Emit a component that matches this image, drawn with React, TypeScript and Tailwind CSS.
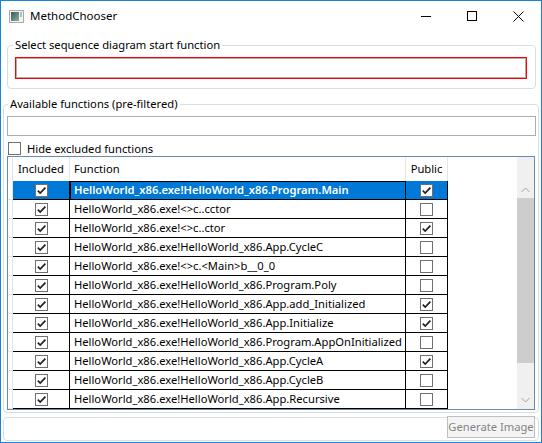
import React from 'react'

const rows: { fn: string; pub: boolean }[] = [
  { fn: 'HelloWorld_x86.exe!HelloWorld_x86.Program.Main', pub: true },
  { fn: 'HelloWorld_x86.exe!<>c..cctor', pub: false },
  { fn: 'HelloWorld_x86.exe!<>c..ctor', pub: true },
  { fn: 'HelloWorld_x86.exe!HelloWorld_x86.App.CycleC', pub: false },
  { fn: 'HelloWorld_x86.exe!<>c.<Main>b__0_0', pub: false },
  { fn: 'HelloWorld_x86.exe!HelloWorld_x86.Program.Poly', pub: false },
  { fn: 'HelloWorld_x86.exe!HelloWorld_x86.App.add_Initialized', pub: true },
  { fn: 'HelloWorld_x86.exe!HelloWorld_x86.App.Initialize', pub: true },
  { fn: 'HelloWorld_x86.exe!HelloWorld_x86.Program.AppOnInitialized', pub: false },
  { fn: 'HelloWorld_x86.exe!HelloWorld_x86.App.CycleA', pub: true },
  { fn: 'HelloWorld_x86.exe!HelloWorld_x86.App.CycleB', pub: false },
  { fn: 'HelloWorld_x86.exe!HelloWorld_x86.App.Recursive', pub: false },
]

function Check({ checked }: { checked: boolean }) {
  return (
    <span className="flex h-[13px] w-[13px] items-center justify-center border border-[#707070] bg-white">
      {checked && (
        <svg width="11" height="11" viewBox="0 0 11 11">
          <path d="M1.8 5.6 L4.2 8 L9.4 2.6" fill="none" stroke="#212121" strokeWidth="1.7" />
        </svg>
      )}
    </span>
  )
}

function AppIcon() {
  return (
    <svg width="15" height="13" viewBox="0 0 15 13">
      <defs>
        <linearGradient id="ic" x1="0" y1="0" x2="1" y2="1">
          <stop offset="0" stopColor="#2f5563" />
          <stop offset="1" stopColor="#8fb39a" />
        </linearGradient>
      </defs>
      <rect x="0.5" y="0.5" width="14" height="12" fill="#f4f4f4" stroke="#a9a9a9" />
      <rect x="2" y="2" width="8" height="9" fill="url(#ic)" />
      <rect x="11" y="2" width="2" height="5" fill="#b8b8b8" />
    </svg>
  )
}

export default function App() {
  return (
    <div className="flex h-[443px] w-[542px] flex-col border border-[#1883d7] bg-white font-['Noto_Sans',sans-serif] text-[11.2px] text-black">
      {/* title bar */}
      <div className="flex h-[30px] shrink-0 items-center">
        <div className="ml-[8px] flex items-center">
          <AppIcon />
        </div>
        <span className="ml-[6px] text-[11.5px] leading-none">MethodChooser</span>
        <div className="ml-auto flex h-full">
          <div className="flex h-full w-[46px] items-center justify-center">
            <span className="h-px w-[10px] bg-black" />
          </div>
          <div className="flex h-full w-[46px] items-center justify-center">
            <span className="h-[10px] w-[10px] border border-black" />
          </div>
          <div className="flex h-full w-[46px] items-center justify-center">
            <svg width="11" height="11" viewBox="0 0 11 11">
              <path d="M0.5 0.5 L10.5 10.5 M10.5 0.5 L0.5 10.5" stroke="#000" strokeWidth="1" />
            </svg>
          </div>
        </div>
      </div>

      {/* start function group */}
      <fieldset className="ml-[6px] mt-[7px] w-[529px] rounded-[4px] border border-[#d5dfe5] pb-[9px] pl-[5px]">
        <legend className="px-[2px] leading-[14px]">Select sequence diagram start function</legend>
        <div className="ml-[2px] mt-[5px] h-[22px] w-[512px] border border-[#ff0000]">
          <div className="h-full w-full border border-[#abadb3] bg-white" />
        </div>
      </fieldset>

      {/* available functions group */}
      <fieldset className="ml-[2px] mt-[8px] w-[536px] rounded-[4px] border border-[#d5dfe5] pb-[2px] pl-[3px]">
        <legend className="ml-[1px] px-[2px] leading-[14px]">Available functions (pre-filtered)</legend>
        <div className="mt-[5px] h-[20px] w-[529px] border border-[#abadb3] bg-white" />
        <div className="ml-[1px] mt-[6px] flex h-[14px] items-start gap-[6px]">
          <Check checked={false} />
          <span className="leading-[14px]">Hide excluded functions</span>
        </div>

        {/* data grid */}
        <div className="flex h-[254px] w-[528px] border border-[#688caf] bg-white">
          <div className="flex flex-1 flex-col overflow-hidden">
            <div className="flex h-[24px] shrink-0">
              <div className="w-[5px] border-r border-[#e5e5e5]" />
              <div className="flex w-[57px] items-center justify-center border-r border-[#e5e5e5] pt-px">Included</div>
              <div className="flex w-[336px] items-center border-r border-[#e5e5e5] pl-[4px] pt-px">Function</div>
              <div className="flex w-[42px] items-center justify-center border-r border-[#e5e5e5] pt-px">Public</div>
              <div className="flex-1" />
            </div>
            {rows.map((r, i) => {
              const sel = i === 0
              return (
                <div key={i} className="flex h-[19px] shrink-0">
                  <div className="w-[5px] border-b border-r border-[#e5e5e5]" />
                  <div
                    className={`flex w-[57px] items-center justify-center border-b border-r border-black ${sel ? 'bg-[#0078d7]' : ''}`}
                  >
                    <Check checked />
                  </div>
                  <div
                    className={`flex w-[336px] items-center overflow-hidden whitespace-nowrap border-b border-r border-black pl-[4px] ${
                      sel ? 'bg-[#0078d7] font-semibold text-white shadow-[inset_1px_1px_0_#000]' : ''
                    }`}
                  >
                    {r.fn}
                  </div>
                  <div
                    className={`flex w-[42px] items-center justify-center border-b border-r border-black ${sel ? 'bg-[#0078d7]' : ''}`}
                  >
                    <Check checked={r.pub} />
                  </div>
                  <div className="flex-1" />
                </div>
              )
            })}
          </div>

          {/* scrollbar */}
          <div className="flex w-[17px] flex-col bg-[#f0f0f0]">
            <div className="h-[24px]" />
            <div className="flex h-[17px] items-center justify-center">
              <svg width="9" height="6" viewBox="0 0 9 6">
                <path d="M0.5 5 L4.5 1 L8.5 5" fill="none" stroke="#a0a0a0" strokeWidth="1" />
              </svg>
            </div>
            <div className="h-[165px] bg-[#cdcdcd]" />
            <div className="flex-1" />
            <div className="flex h-[18px] items-center justify-center">
              <svg width="9" height="6" viewBox="0 0 9 6">
                <path d="M0.5 1 L4.5 5 L8.5 1" fill="none" stroke="#a0a0a0" strokeWidth="1" />
              </svg>
            </div>
          </div>
        </div>
      </fieldset>

      {/* bottom panel */}
      <div className="ml-[2px] mt-[4px] flex h-[24px] w-[536px] justify-end rounded-[4px] border border-[#d5dfe5]">
        <button
          disabled
          className="-mt-[2px] mr-[3px] h-[22px] w-[88px] border border-[#bfbfbf] bg-[#f4f4f4] text-[11.2px] leading-none text-[#838383]"
        >
          Generate Image
        </button>
      </div>
    </div>
  )
}
